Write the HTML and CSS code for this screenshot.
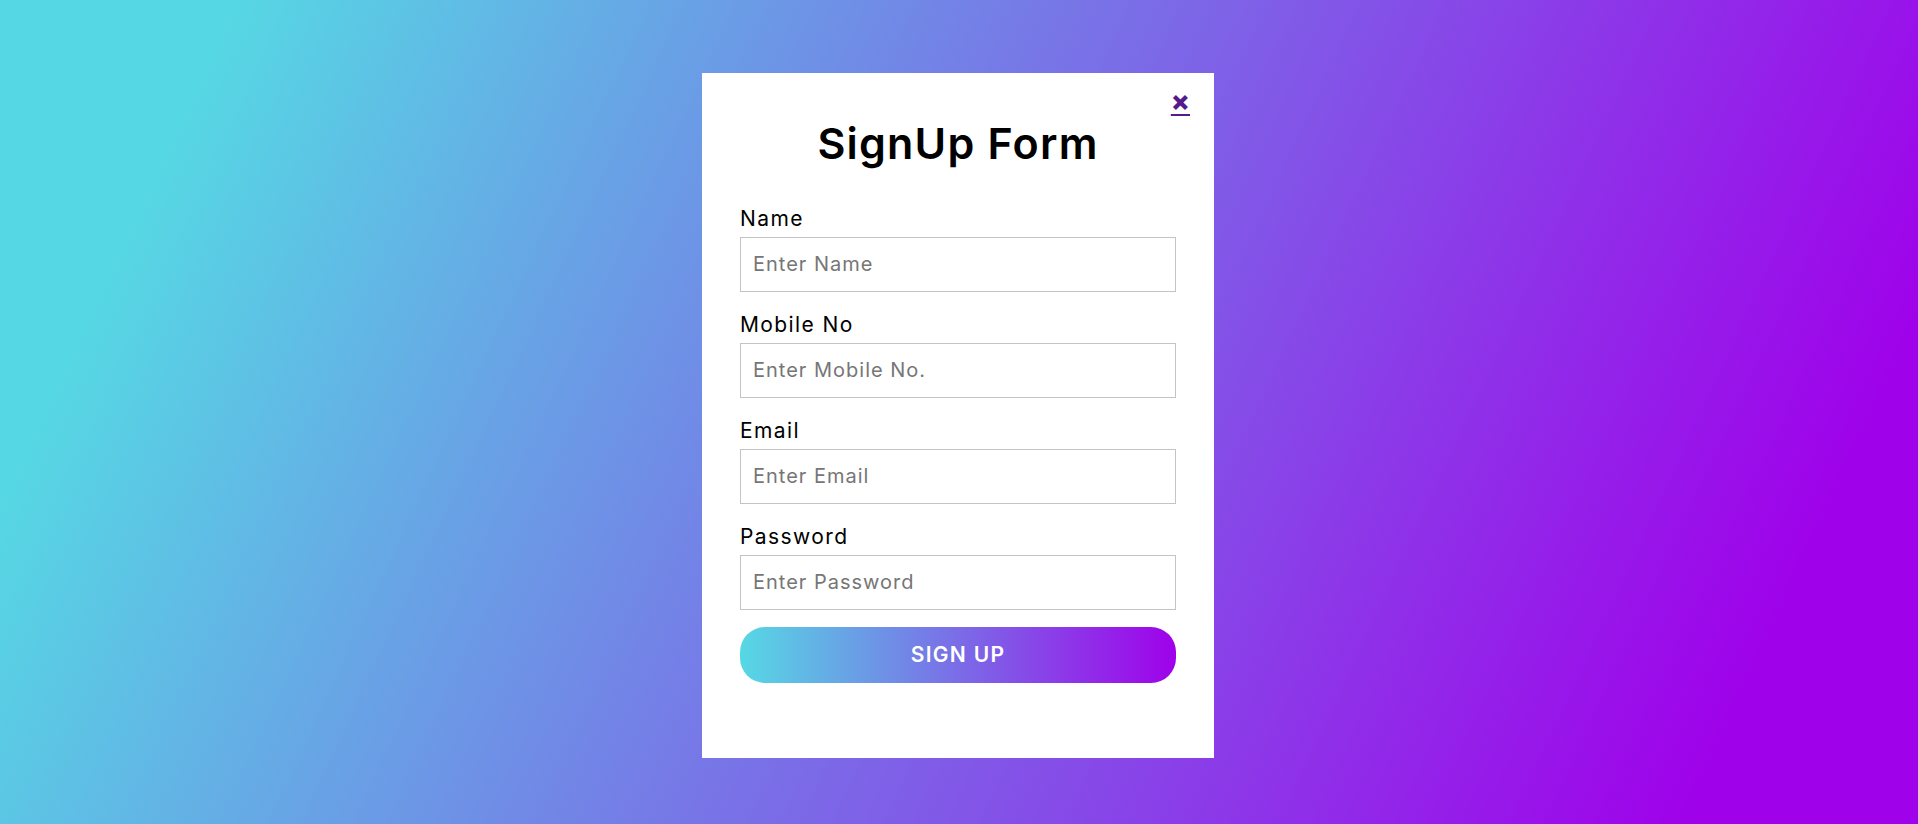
FILE: index.html
```html
<!DOCTYPE html>
<html lang="en">
<head>
<meta charset="utf-8">
<title>SignUp Form</title>
<link rel="stylesheet" href="styles.css">
</head>
<body>
<main class="page">
  <div class="card">
    <a class="close" href="#">&times;</a>
    <h2 class="title">SignUp Form</h2>
    <form class="form">
      <div class="field">
        <label class="label">Name</label>
        <input class="input" type="text" placeholder="Enter Name">
      </div>
      <div class="field">
        <label class="label">Mobile No</label>
        <input class="input" type="text" placeholder="Enter Mobile No.">
      </div>
      <div class="field">
        <label class="label">Email</label>
        <input class="input" type="text" placeholder="Enter Email">
      </div>
      <div class="field">
        <label class="label">Password</label>
        <input class="input" type="password" placeholder="Enter Password">
      </div>
      <button class="btn" type="button">SIGN UP</button>
    </form>
  </div>
</main>
</body>
</html>
```
FILE: styles.css
```css
* { box-sizing: border-box; }
html, body { margin: 0; padding: 0; }
body {
  font-family: "Inter", "Open Sans", "Liberation Sans", sans-serif;
  background: linear-gradient(115deg, #56d8e4 10%, #9f01ea 90%);
  height: 100vh;
  overflow: hidden;
}
.page {
  height: 100vh;
  display: flex;
  align-items: center;
  justify-content: center;
  padding-right: 2px;
}
.card {
  position: relative;
  width: 512px;
  height: 685px;
  background: #fff;
  padding: 41px 38px 0 38px;
  margin-top: 6px;
}
.close {
  position: absolute;
  top: 8px;
  right: 24px;
  color: #551a8b;
  font-size: 28px;
  font-weight: 800;
  line-height: 40px;
  text-decoration: underline;
  text-decoration-thickness: 2px;
  text-underline-offset: 3px;
}
.title {
  margin: 0 0 35px 0;
  text-align: center;
  font-size: 43px;
  font-weight: 600;
  letter-spacing: 1.2px;
  line-height: 58px;
  color: #000;
}
.form {
  display: flex;
  flex-direction: column;
}
.field {
  display: flex;
  flex-direction: column;
  gap: 6px;
  margin-bottom: 21px;
}
.field:last-of-type { margin-bottom: 17px; }
.label {
  font-size: 21px;
  line-height: 24px;
  letter-spacing: 1.4px;
  color: #000;
}
.input {
  height: 55px;
  width: 100%;
  border: 1px solid #c4c4c4;
  padding: 0 12px;
  font-family: inherit;
  font-size: 20px;
  letter-spacing: 1px;
  outline: none;
}
.input::placeholder { color: #767676; }
.btn {
  height: 56px;
  width: 100%;
  border: none;
  border-radius: 25px;
  background: linear-gradient(to right, #56d8e4 0%, #9f01ea 100%);
  color: #fff;
  font-family: inherit;
  font-size: 21px;
  font-weight: 600;
  letter-spacing: 1.3px;
  cursor: pointer;
}
```
